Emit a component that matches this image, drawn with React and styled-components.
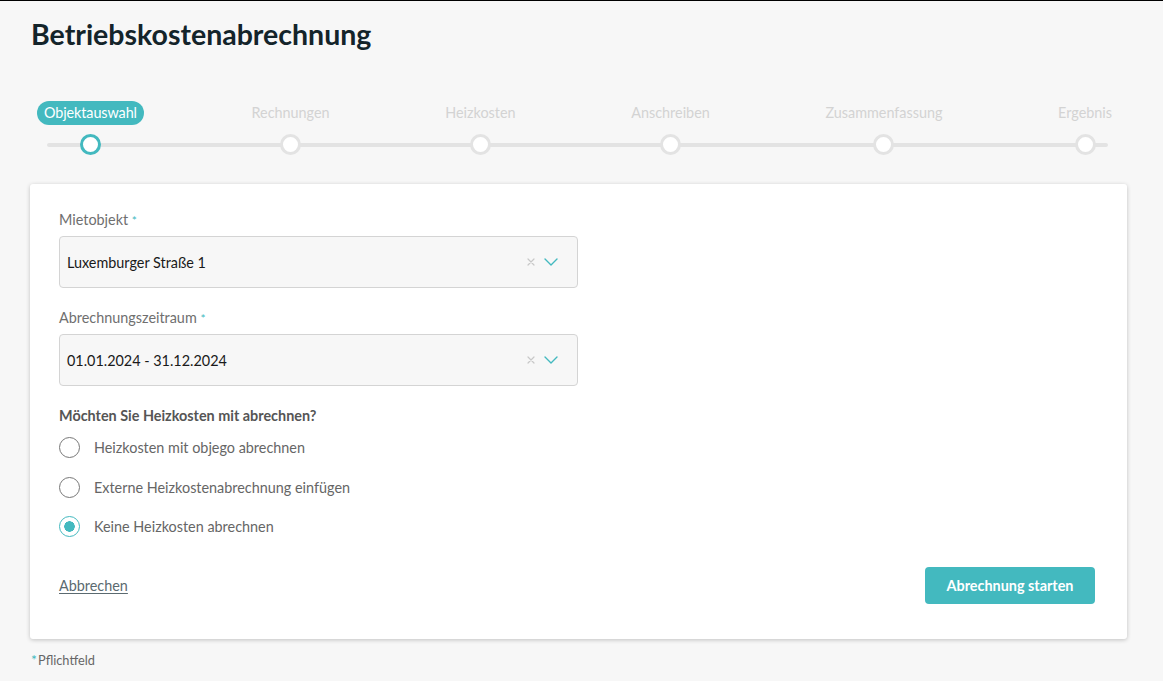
import React from 'react'
import styled, { createGlobalStyle } from 'styled-components'

const teal = '#43b9bf'

const GlobalStyle = createGlobalStyle`
    html, body {
        margin:0;
        padding:0;
    }
    body {
        background:#f7f7f7;
        border-top:1px solid #000;
        font-family:Lato, "Open Sans", sans-serif;
        color:#333;
    }
`

const steps = ["Objektauswahl", "Rechnungen", "Heizkosten", "Anschreiben", "Zusammenfassung", "Ergebnis"]

const options = [
    { label: "Heizkosten mit objego abrechnen", checked: false },
    { label: "Externe Heizkostenabrechnung einfügen", checked: false },
    { label: "Keine Heizkosten abrechnen", checked: true }
]

const Chevron = () => (
    <svg width="14" height="8" viewBox="0 0 14 8" fill="none">
        <path d="M1 1l6 6 6-6" stroke={teal} strokeWidth="1.4" strokeLinecap="round" strokeLinejoin="round" />
    </svg>
)

const Clear = () => (
    <svg width="8" height="8" viewBox="0 0 8 8" fill="none">
        <path d="M1 1l6 6M7 1l-6 6" stroke="#c8c8c8" strokeWidth="1.2" strokeLinecap="round" />
    </svg>
)

const SelectField = ({ label, value }) => (
    <Field>
        <Label>{label} <Star>*</Star></Label>
        <Select>
            <span>{value}</span>
            <Icons>
                <Clear />
                <Chevron />
            </Icons>
        </Select>
    </Field>
)

const App = () => {
    return (
        <>
            <GlobalStyle />
            <Page>
                <Title>Betriebskostenabrechnung</Title>

                <Stepper>
                    {steps.map((step, index) => (
                        <Step key={step}>
                            <StepLabel active={index === 0}>{step}</StepLabel>
                            <Dot active={index === 0} />
                        </Step>
                    ))}
                </Stepper>

                <Card>
                    <SelectField label="Mietobjekt" value="Luxemburger Straße 1" />
                    <SelectField label="Abrechnungszeitraum" value="01.01.2024 - 31.12.2024" />

                    <Question>Möchten Sie Heizkosten mit abrechnen?</Question>
                    <RadioList>
                        {options.map(item => (
                            <RadioRow key={item.label}>
                                <Radio checked={item.checked} />
                                <span>{item.label}</span>
                            </RadioRow>
                        ))}
                    </RadioList>

                    <CardFooter>
                        <CancelLink href="#">Abbrechen</CancelLink>
                        <StartButton>Abrechnung starten</StartButton>
                    </CardFooter>
                </Card>

                <Hint><HintStar>*</HintStar>Pflichtfeld</Hint>
            </Page>
        </>
    )
}

export default App


const Page = styled.div`
    padding:0 36px 20px 30px;
`

const Title = styled.h1`
    margin:0;
    padding-top:16px;
    font-size:28.5px;
    line-height:34px;
    font-weight:700;
    color:#14242a;
    padding-left:1px;
`

const Stepper = styled.div`
    position:relative;
    display:flex;
    justify-content:space-between;
    margin:50px 7px 0 7px;
    &::before{
        content:"";
        position:absolute;
        left:10px;
        right:12px;
        top:42px;
        height:4px;
        background:#e3e3e3;
        border-radius:2px;
    }
`

const Step = styled.div`
    position:relative;
    display:flex;
    flex-direction:column;
    align-items:center;
    gap:9px;
`

const StepLabel = styled.div`
    padding:0 ${p => p.active ? '7px' : '8px'};
    height:24px;
    line-height:24px;
    border-radius:12px;
    font-size:14.4px;
    white-space:nowrap;
    letter-spacing:${p => p.active ? '-0.1px' : '0'};
    color:${p => p.active ? '#fff' : '#d3d3d3'};
    background:${p => p.active ? teal : 'transparent'};
`

const Dot = styled.div`
    box-sizing:border-box;
    width:21px;
    height:21px;
    border-radius:50%;
    background:#fff;
    border:3px solid ${p => p.active ? teal : '#e3e3e3'};
`

const Card = styled.div`
    margin-top:29px;
    background:#fff;
    border-radius:3px;
    box-shadow:0 1px 4px rgba(0,0,0,0.22);
    padding:26px 32px 35px 29px;
`

const Field = styled.div`
    margin-bottom:20px;
`

const Label = styled.div`
    font-size:14.4px;
    line-height:20px;
    color:#6f6f6f;
    margin-bottom:5px;
`

const Star = styled.span`
    color:${teal};
    font-size:12px;
`

const Select = styled.div`
    box-sizing:border-box;
    width:519px;
    height:52px;
    display:flex;
    align-items:center;
    justify-content:space-between;
    padding:0 19px 0 7px;
    background:#f7f7f7;
    border:1px solid #d4d4d4;
    border-radius:4px;
    font-size:14.4px;
    color:#1a1a1a;
`

const Icons = styled.div`
    display:flex;
    align-items:center;
    gap:9px;
`

const Question = styled.div`
    font-size:14.4px;
    line-height:20px;
    font-weight:700;
    color:#555;
`

const RadioList = styled.div`
    display:flex;
    flex-direction:column;
    gap:18.5px;
    margin-top:11px;
`

const RadioRow = styled.label`
    display:flex;
    align-items:center;
    gap:14px;
    font-size:14.4px;
    line-height:21px;
    color:#666;
`

const Radio = styled.span`
    box-sizing:border-box;
    width:21px;
    height:21px;
    border-radius:50%;
    border:1.5px solid ${p => p.checked ? teal : '#777'};
    background:${p => p.checked ? `radial-gradient(circle, ${teal} 0 5px, #fff 5.5px)` : '#fff'};
`

const CardFooter = styled.div`
    display:flex;
    justify-content:space-between;
    align-items:center;
    margin-top:30px;
`

const CancelLink = styled.a`
    font-size:14.4px;
    color:#5b6a70;
    text-decoration:underline;
    text-underline-offset:2px;
`

const StartButton = styled.button`
    width:170px;
    height:37px;
    border:none;
    border-radius:4px;
    background:${teal};
    color:#fff;
    font-family:Lato, sans-serif;
    font-size:14.4px;
    font-weight:700;
    cursor:pointer;
`

const Hint = styled.div`
    margin-top:13px;
    padding-left:1px;
    font-size:12.8px;
    line-height:16px;
    color:#666;
`

const HintStar = styled.span`
    color:${teal};
    font-size:14px;
    margin-right:1px;
`
